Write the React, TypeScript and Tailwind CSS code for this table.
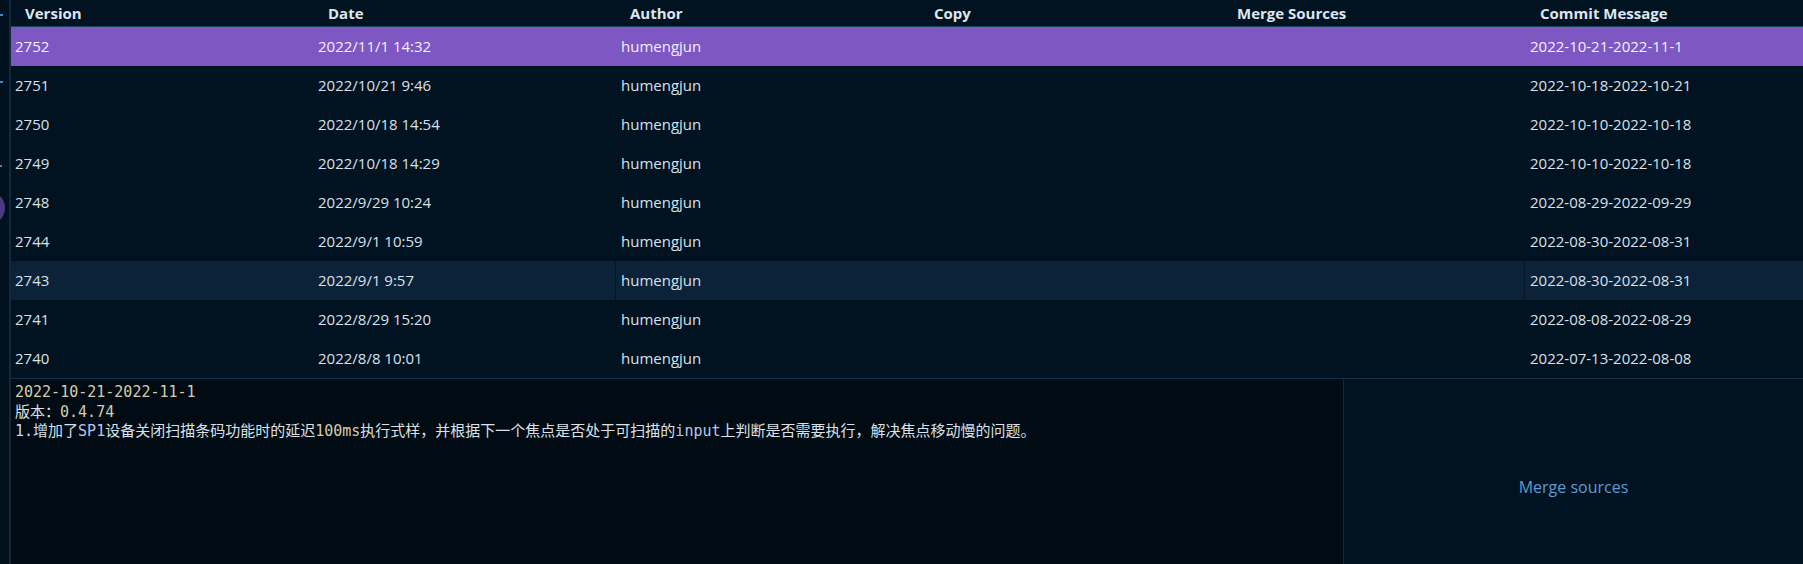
import React from "react";

type Row = { v: string; d: string; a: string; c: string };

const rows: Row[] = [
  { v: "2752", d: "2022/11/1 14:32", a: "humengjun", c: "2022-10-21-2022-11-1" },
  { v: "2751", d: "2022/10/21 9:46", a: "humengjun", c: "2022-10-18-2022-10-21" },
  { v: "2750", d: "2022/10/18 14:54", a: "humengjun", c: "2022-10-10-2022-10-18" },
  { v: "2749", d: "2022/10/18 14:29", a: "humengjun", c: "2022-10-10-2022-10-18" },
  { v: "2748", d: "2022/9/29 10:24", a: "humengjun", c: "2022-08-29-2022-09-29" },
  { v: "2744", d: "2022/9/1 10:59", a: "humengjun", c: "2022-08-30-2022-08-31" },
  { v: "2743", d: "2022/9/1 9:57", a: "humengjun", c: "2022-08-30-2022-08-31" },
  { v: "2741", d: "2022/8/29 15:20", a: "humengjun", c: "2022-08-08-2022-08-29" },
  { v: "2740", d: "2022/8/8 10:01", a: "humengjun", c: "2022-07-13-2022-08-08" },
];

const sans = { fontFamily: '"Open Sans", "Noto Sans", sans-serif' };
const mono = { fontFamily: '"DejaVu Sans Mono", "Noto Sans CJK SC", monospace' };

export default function App() {
  return (
    <div className="w-[1803px] h-[564px] overflow-hidden bg-[#011221] flex" style={sans}>
      {/* left strip */}
      <div className="relative w-[11px] shrink-0 h-full bg-[#01111d] border-r-2 border-[#14283d] overflow-hidden">
        <div className="absolute left-0 top-[14px] w-[3px] h-[2px] bg-[#3a8ad0]" />
        <div className="absolute left-0 top-[81px] w-[3px] h-[2px] bg-[#3a8ad0]" />
        <div className="absolute left-0 top-[165px] w-[2px] h-[2px] bg-[#6f7c88]" />
        <div className="absolute left-[-29px] top-[191px] w-[34px] h-[34px] rounded-full bg-[#4a3a80]" />
      </div>

      <div className="flex-1 min-w-0 flex flex-col overflow-hidden">
        {/* header */}
        <div className="flex h-[27px] shrink-0 border-b border-[#164660] text-[15px] font-bold text-[#dde6ef] items-center">
          <div className="w-[301px] shrink-0 pl-[14px]">Version</div>
          <div className="w-[303px] shrink-0 pl-[16px]">Date</div>
          <div className="w-[303px] shrink-0 pl-[15px]">Author</div>
          <div className="w-[303px] shrink-0 pl-[16px]">Copy</div>
          <div className="w-[303px] shrink-0 pl-[16px]">Merge Sources</div>
          <div className="w-[303px] shrink-0 pl-[16px]">Commit Message</div>
        </div>

        {/* rows */}
        <div className="flex flex-col shrink-0">
          {rows.map((r, i) => {
            const selected = i === 0;
            const hover = i === 6;
            const bg = selected ? "bg-[#7e57c2]" : hover ? "bg-[#0c2239]" : "bg-[#011221]";
            const text = selected ? "text-[#f3efff]" : "text-[#d8e1ea]";
            const line = hover ? "border-l border-[#061528]" : "border-l border-transparent";
            return (
              <div key={r.v} className={`flex h-[39px] items-center text-[15px] ${bg} ${text}`}>
                <div className="w-[301px] shrink-0 pl-[4px]">{r.v}</div>
                <div className="w-[303px] shrink-0 pl-[6px]">{r.d}</div>
                <div className={`w-[303px] shrink-0 pl-[5px] h-full flex items-center ${line}`}>{r.a}</div>
                <div className="w-[303px] shrink-0" />
                <div className="w-[303px] shrink-0" />
                <div className={`w-[303px] shrink-0 pl-[5px] h-full flex items-center ${line}`}>{r.c}</div>
              </div>
            );
          })}
        </div>

        {/* bottom panel */}
        <div className="flex h-[216px] shrink-0 border-t border-[#14304a]">
          <div className="w-[1332px] shrink-0 bg-[#010b14] pl-[4px] pt-[4px] text-[15px] leading-[19.5px] text-[#dbe1e7] whitespace-pre" style={mono}>
            <div className="text-[#d6cba9]">2022-10-21-2022-11-1</div>
            <div>
              版本：<span className="text-[#d6cba9]">0.4.74</span>
            </div>
            <div>
              <span className="text-[#cfd8e8]">1.</span>增加了<span className="text-[#b8c6ee]">SP1</span>设备关闭扫描条码功能时的延迟<span className="text-[#d6cba9]">100ms</span>执行式样，并根据下一个焦点是否处于可扫描的<span className="text-[#b8c6ee]">input</span>上判断是否需要执行，解决焦点移动慢的问题。
            </div>
          </div>
          <div className="flex-1 border-l border-[#13283e] bg-[#011220] flex items-center justify-center">
            <span className="text-[16px] text-[#5d9bd3]">Merge sources</span>
          </div>
        </div>
      </div>
    </div>
  );
}
